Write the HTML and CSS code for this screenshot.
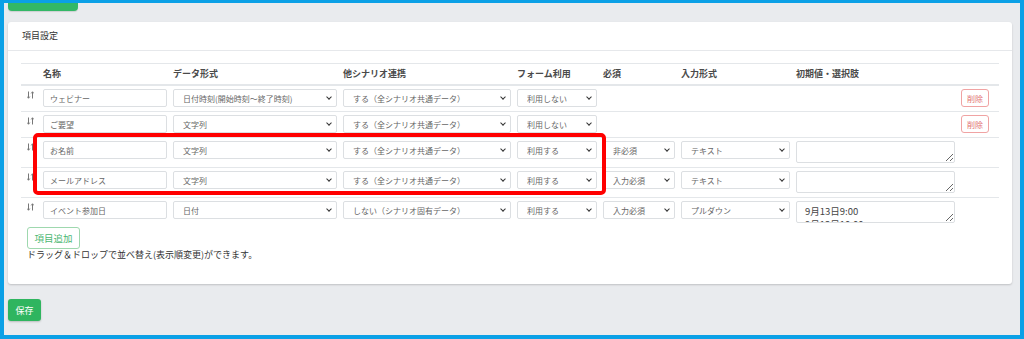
FILE: index.html
```html
<!DOCTYPE html>
<html lang="ja">
<head>
    <meta charset="UTF-8">
    <meta name="viewport" content="width=device-width, initial-scale=1.0">
    <title>項目設定</title>
    <link rel="stylesheet" href="styles.css">
</head>
<body>
    <div class="frame">
        <div class="top-btn"></div>

        <div class="card">
            <div class="card-header">項目設定</div>
            <div class="card-body">
                <div class="table-wrap">
                    <table class="items">
                        <colgroup>
                            <col style="width: 18px">
                            <col style="width: 130px">
                            <col style="width: 170px">
                            <col style="width: 174px">
                            <col style="width: 86px">
                            <col style="width: 78px">
                            <col style="width: 115px">
                            <col style="width: 165px">
                            <col style="width: 42px">
                        </colgroup>
                        <thead>
                            <tr>
                                <th></th>
                                <th>名称</th>
                                <th>データ形式</th>
                                <th>他シナリオ連携</th>
                                <th>フォーム利用</th>
                                <th>必須</th>
                                <th>入力形式</th>
                                <th>初期値・選択肢</th>
                                <th></th>
                            </tr>
                        </thead>
                        <tbody>
                            <tr>
                                <td class="handle"><svg class="sort" width="7" height="8" viewBox="0 0 7 8"><path d="M1.5 0.5V7.2M0.2 5.6L1.5 7.2L2.8 5.6M5.5 7.5V0.8M4.2 2.4L5.5 0.8L6.8 2.4" fill="none" stroke="#777" stroke-width="1"/></svg></td>
                                <td><input class="field" type="text" value="ウェビナー"></td>
                                <td><span class="sel"><select class="field"><option>日付時刻(開始時刻〜終了時刻)</option></select></span></td>
                                <td><span class="sel"><select class="field"><option>する（全シナリオ共通データ）</option></select></span></td>
                                <td><span class="sel"><select class="field"><option>利用しない</option></select></span></td>
                                <td></td>
                                <td></td>
                                <td></td>
                                <td><button class="btn-del">削除</button></td>
                            </tr>
                            <tr>
                                <td class="handle"><svg class="sort" width="7" height="8" viewBox="0 0 7 8"><path d="M1.5 0.5V7.2M0.2 5.6L1.5 7.2L2.8 5.6M5.5 7.5V0.8M4.2 2.4L5.5 0.8L6.8 2.4" fill="none" stroke="#777" stroke-width="1"/></svg></td>
                                <td><input class="field" type="text" value="ご要望"></td>
                                <td><span class="sel"><select class="field"><option>文字列</option></select></span></td>
                                <td><span class="sel"><select class="field"><option>する（全シナリオ共通データ）</option></select></span></td>
                                <td><span class="sel"><select class="field"><option>利用しない</option></select></span></td>
                                <td></td>
                                <td></td>
                                <td></td>
                                <td><button class="btn-del">削除</button></td>
                            </tr>
                            <tr>
                                <td class="handle"><svg class="sort" width="7" height="8" viewBox="0 0 7 8"><path d="M1.5 0.5V7.2M0.2 5.6L1.5 7.2L2.8 5.6M5.5 7.5V0.8M4.2 2.4L5.5 0.8L6.8 2.4" fill="none" stroke="#777" stroke-width="1"/></svg></td>
                                <td><input class="field" type="text" value="お名前"></td>
                                <td><span class="sel"><select class="field"><option>文字列</option></select></span></td>
                                <td><span class="sel"><select class="field"><option>する（全シナリオ共通データ）</option></select></span></td>
                                <td><span class="sel"><select class="field"><option>利用する</option></select></span></td>
                                <td><span class="sel"><select class="field"><option>非必須</option></select></span></td>
                                <td><span class="sel"><select class="field"><option>テキスト</option></select></span></td>
                                <td><textarea class="field area"></textarea></td>
                                <td></td>
                            </tr>
                            <tr>
                                <td class="handle"><svg class="sort" width="7" height="8" viewBox="0 0 7 8"><path d="M1.5 0.5V7.2M0.2 5.6L1.5 7.2L2.8 5.6M5.5 7.5V0.8M4.2 2.4L5.5 0.8L6.8 2.4" fill="none" stroke="#777" stroke-width="1"/></svg></td>
                                <td><input class="field" type="text" value="メールアドレス"></td>
                                <td><span class="sel"><select class="field"><option>文字列</option></select></span></td>
                                <td><span class="sel"><select class="field"><option>する（全シナリオ共通データ）</option></select></span></td>
                                <td><span class="sel"><select class="field"><option>利用する</option></select></span></td>
                                <td><span class="sel"><select class="field"><option>入力必須</option></select></span></td>
                                <td><span class="sel"><select class="field"><option>テキスト</option></select></span></td>
                                <td><textarea class="field area"></textarea></td>
                                <td></td>
                            </tr>
                            <tr>
                                <td class="handle"><svg class="sort" width="7" height="8" viewBox="0 0 7 8"><path d="M1.5 0.5V7.2M0.2 5.6L1.5 7.2L2.8 5.6M5.5 7.5V0.8M4.2 2.4L5.5 0.8L6.8 2.4" fill="none" stroke="#777" stroke-width="1"/></svg></td>
                                <td><input class="field" type="text" value="イベント参加日"></td>
                                <td><span class="sel"><select class="field"><option>日付</option></select></span></td>
                                <td><span class="sel"><select class="field"><option>しない（シナリオ固有データ）</option></select></span></td>
                                <td><span class="sel"><select class="field"><option>利用する</option></select></span></td>
                                <td><span class="sel"><select class="field"><option>入力必須</option></select></span></td>
                                <td><span class="sel"><select class="field"><option>プルダウン</option></select></span></td>
                                <td><textarea class="field area filled">9月13日9:00
9月13日10:00</textarea></td>
                                <td></td>
                            </tr>
                        </tbody>
                    </table>

                    <!-- annotation around the two highlighted rows -->
                    <div class="highlight"></div>
                </div>

                <div class="table-foot">
                    <button class="btn-add">項目追加</button>
                    <p class="hint">ドラッグ＆ドロップで並べ替え(表示順変更)ができます。</p>
                </div>
            </div>
        </div>

        <button class="btn-save">保存</button>
    </div>
</body>
</html>
```

FILE: styles.css
```css
html, body {
    margin: 0;
    height: 100%;
}

body {
    box-sizing: border-box;
    padding: 3px 4px 4px 4px;
    background-color: #0ba0e6;
    font-family: "Noto Sans CJK JP", "Noto Sans", sans-serif;
    color: #333;
}

.frame {
    box-sizing: border-box;
    height: 100%;
    padding: 0 8px 0 4px;
    background-color: #e9ebee;
    overflow: hidden;
}

.top-btn {
    width: 70px;
    height: 8px;
    background-color: #33b866;
    border-radius: 0 0 4px 4px;
    box-shadow: 0 1px 1px rgba(0,0,0,0.12);
}

.card {
    margin-top: 11px;
    background-color: #fff;
    border-radius: 3px;
    box-shadow: 0 1px 2px rgba(0,0,0,0.18);
}

.card-header {
    height: 28px;
    line-height: 28px;
    padding: 0 14px;
    border-bottom: 1px solid #e6e8eb;
    font-size: 9px;
    color: #333;
}

.card-body {
    padding: 12px 13px 23px 13px;
}

.table-wrap {
    position: relative;
}

.items {
    width: 100%;
    table-layout: fixed;
    border-collapse: collapse;
}

.items th {
    text-align: left;
    font-size: 9px;
    font-weight: bold;
    color: #4a4a4a;
    line-height: 12px;
    padding: 4px 2px 4px 4px;
    border-top: 1px solid #e4e7ea;
    border-bottom: 2px solid #e4e7ea;
}

.items td {
    padding: 3px 2px 4px 4px;
    border-top: 1px solid #e4e7ea;
    vertical-align: top;
}

.items td.handle {
    padding-left: 6px;
}

.sort {
    display: block;
    margin-top: 2px;
}

.field {
    display: block;
    box-sizing: border-box;
    width: 100%;
    height: 18px;
    margin: 0;
    padding: 0 6px;
    border: 1px solid #dcdfe2;
    border-radius: 2px;
    background-color: #fff;
    font-family: inherit;
    font-size: 8px;
    color: #666;
    outline: none;
}

.sel {
    display: block;
    position: relative;
}

.sel select {
    -webkit-appearance: none;
    appearance: none;
    padding-left: 9px;
}

/* chevron drawn in place of the native arrow */
.sel::after {
    content: "";
    position: absolute;
    right: 6px;
    top: 6px;
    width: 3px;
    height: 3px;
    border-right: 1.6px solid #333;
    border-bottom: 1.6px solid #333;
    transform: rotate(45deg);
    pointer-events: none;
}

.area {
    height: 22px;
    padding: 3px 8px;
    resize: vertical;
    overflow: hidden;
}

.area.filled {
    font-size: 9.5px;
    line-height: 13px;
    color: #444;
}

.btn-del {
    display: block;
    width: 28px;
    height: 18px;
    padding: 0;
    border: 1px solid #f0a3a3;
    border-radius: 3px;
    background-color: #fff;
    font-family: inherit;
    font-size: 8px;
    color: #e27272;
}

.highlight {
    position: absolute;
    left: 12px;
    top: 70px;
    width: 573px;
    height: 62px;
    box-sizing: border-box;
    border: 4px solid #ff0000;
    border-radius: 5px;
}

.table-foot {
    padding-left: 6px;
}

.btn-add {
    display: block;
    width: 53px;
    height: 22px;
    padding: 0;
    border: 1px solid #9ed8ae;
    border-radius: 3px;
    background-color: #fff;
    font-family: inherit;
    font-size: 9.5px;
    color: #4cb772;
}

.hint {
    margin: 0;
    font-size: 9px;
    line-height: 12px;
    color: #333;
}

.btn-save {
    display: block;
    margin-top: 15px;
    width: 33px;
    height: 22px;
    padding: 0;
    border: none;
    border-radius: 3px;
    background-color: #2fb55f;
    box-shadow: 0 1px 2px rgba(0,0,0,0.2);
    font-family: inherit;
    font-size: 9px;
    color: #fff;
}
```
